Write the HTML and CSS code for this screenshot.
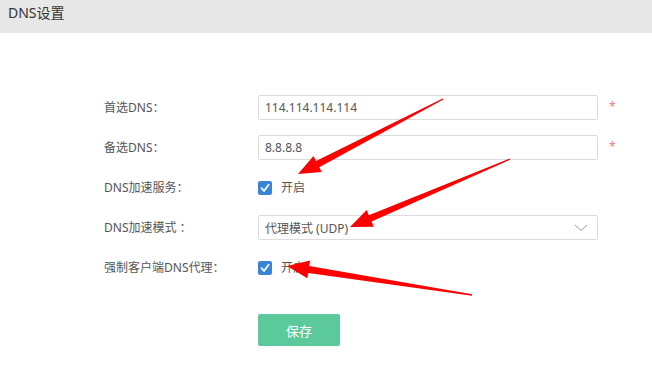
FILE: index.html
```html
<!DOCTYPE html>
<html lang="zh-CN">

<head>
    <meta charset="UTF-8">
    <link rel="stylesheet" href="styles.css">
    <title>DNS设置</title>
</head>

<body>
    <div class="page-header">DNS设置</div>

    <form class="form">
        <div class="row">
            <label class="label">首选DNS：</label>
            <div class="field"><input class="input" type="text" value="114.114.114.114"></div>
            <span class="req">*</span>
        </div>
        <div class="row">
            <label class="label">备选DNS：</label>
            <div class="field"><input class="input" type="text" value="8.8.8.8"></div>
            <span class="req">*</span>
        </div>
        <div class="row">
            <label class="label">DNS加速服务：</label>
            <div class="field">
                <span class="check">
                    <svg width="14" height="14" viewBox="0 0 14 14"><path d="M3.5 7.2 L6 10 L10.6 3.8" fill="none" stroke="#fff" stroke-width="1.8" stroke-linecap="round" stroke-linejoin="round"/></svg>
                </span>
                <span class="check-text">开启</span>
            </div>
        </div>
        <div class="row">
            <label class="label">DNS加速模式 ：</label>
            <div class="field">
                <div class="select">
                    <span>代理模式 (UDP)</span>
                    <svg class="chevron" width="14" height="8" viewBox="0 0 14 8"><path d="M1 1 L7 6.5 L13 1" fill="none" stroke="#999" stroke-width="1"/></svg>
                </div>
            </div>
        </div>
        <div class="row">
            <label class="label">强制客户端DNS代理：</label>
            <div class="field">
                <span class="check">
                    <svg width="14" height="14" viewBox="0 0 14 14"><path d="M3.5 7.2 L6 10 L10.6 3.8" fill="none" stroke="#fff" stroke-width="1.8" stroke-linecap="round" stroke-linejoin="round"/></svg>
                </span>
                <span class="check-text">开启</span>
            </div>
        </div>
        <div class="actions">
            <button class="btn-save" type="button">保存</button>
        </div>
    </form>

    <!-- red annotation arrows drawn over the form -->
    <svg class="marks" width="652" height="379" viewBox="0 0 652 379">
        <polygon fill="#ff0000" points="443.3,99.6 319.2,167.2 321.7,172.1 298,174 313.5,156.1 316,161 442.7,98.4"/>
        <polygon fill="#ff0000" points="510.3,159.6 371.6,221.6 373.7,226.7 350,227 366.7,210.1 368.8,215.2 509.7,158.4"/>
        <polygon fill="#ff0000" points="471.9,295.7 308.2,272.9 307.3,278.3 287,266 310.1,260.5 309.2,265.9 472.1,294.3"/>
    </svg>
</body>

</html>
```

FILE: styles.css
```css
* {
    font-family: "Noto Sans", "Noto Sans CJK SC", sans-serif;
    box-sizing: border-box;
}

body {
    margin: 0;
    background-color: #fff;
    position: relative;
    width: 652px;
    height: 379px;
    overflow: hidden;
}

.page-header {
    height: 33px;
    line-height: 26px;
    padding: 0 8px;
    background-color: #e8e8e8;
    font-size: 14px;
    color: #333;
}

.form {
    margin: 62px 0 0 0;
    padding-left: 104px;
}

.row {
    display: flex;
    align-items: center;
    height: 25px;
    margin-bottom: 15px;
}

.label {
    width: 154px;
    font-size: 12px;
    color: #555;
    line-height: 16px;
}

.field {
    width: 340px;
    display: flex;
    align-items: center;
}

.input {
    width: 340px;
    height: 25px;
    border: 1px solid #dcdcdc;
    border-radius: 2px;
    padding: 0 6px;
    font-size: 12px;
    color: #555;
    outline: none;
}

.req {
    margin-left: 11px;
    font-size: 12px;
    color: #f08080;
    line-height: 12px;
    margin-top: -2px;
}

.check {
    display: flex;
    width: 14px;
    height: 14px;
    border-radius: 2px;
    background-color: #3a84d8;
}

.check-text {
    margin-left: 9px;
    font-size: 12px;
    color: #555;
    line-height: 16px;
}

.select {
    width: 340px;
    height: 25px;
    border: 1px solid #dcdcdc;
    border-radius: 2px;
    padding: 0 6px;
    display: flex;
    align-items: center;
    justify-content: space-between;
    font-size: 12px;
    color: #555;
}

.chevron {
    margin-right: 3px;
}

.actions {
    padding-left: 154px;
    margin-top: 34px;
}

.btn-save {
    width: 82px;
    height: 32px;
    border: none;
    border-radius: 2px;
    background-color: #5cc99d;
    color: #fff;
    font-size: 13px;
    cursor: pointer;
}

.marks {
    position: absolute;
    left: 0;
    top: 0;
    pointer-events: none;
}
```
